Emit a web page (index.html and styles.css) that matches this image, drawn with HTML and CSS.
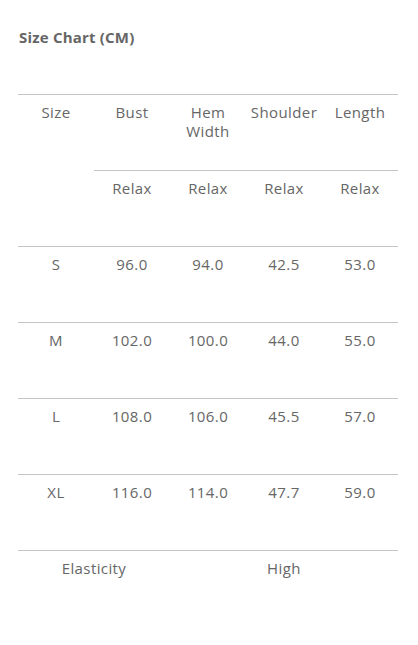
FILE: index.html
```html
<!DOCTYPE html>
<html lang="en">
<head>
  <meta charset="UTF-8">
  <meta name="viewport" content="width=device-width, initial-scale=1.0">
  <title>Size Chart</title>
  <link rel="stylesheet" href="styles.css">
</head>
<body>

<div class="chart">
  <h2 class="chart-title">Size Chart (CM)</h2>
  <table class="size-table">
    <tr>
      <td rowspan="2">Size</td>
      <td>Bust</td>
      <td>Hem<br>Width</td>
      <td>Shoulder</td>
      <td>Length</td>
    </tr>
    <tr>
      <td>Relax</td>
      <td>Relax</td>
      <td>Relax</td>
      <td>Relax</td>
    </tr>
    <tr>
      <td>S</td><td>96.0</td><td>94.0</td><td>42.5</td><td>53.0</td>
    </tr>
    <tr>
      <td>M</td><td>102.0</td><td>100.0</td><td>44.0</td><td>55.0</td>
    </tr>
    <tr>
      <td>L</td><td>108.0</td><td>106.0</td><td>45.5</td><td>57.0</td>
    </tr>
    <tr>
      <td>XL</td><td>116.0</td><td>114.0</td><td>47.7</td><td>59.0</td>
    </tr>
    <tr class="last-row">
      <td colspan="2">Elasticity</td>
      <td colspan="3">High</td>
    </tr>
  </table>
</div>

</body>
</html>
```

FILE: styles.css
```css
body {
  margin: 0;
  padding: 0;
  background-color: #fff;
  font-family: "Open Sans", Arial, sans-serif;
  color: #666;
}
.chart {
  padding: 28px 20px 0 18px;
}
.chart-title {
  margin: 0 0 0 1px;
  font-size: 15px;
  font-weight: 700;
  line-height: 18px;
  letter-spacing: 0.2px;
  color: #666;
}
.size-table {
  margin-top: 48px;
  width: 380px;
  border-collapse: collapse;
  table-layout: fixed;
}
.size-table td {
  width: 76px;
  height: 76px;
  box-sizing: border-box;
  padding: 8px 0 0;
  border-top: 1px solid #c4c4c4;
  vertical-align: top;
  text-align: center;
  font-size: 15px;
  line-height: 19px;
  letter-spacing: 0.4px;
}
```
